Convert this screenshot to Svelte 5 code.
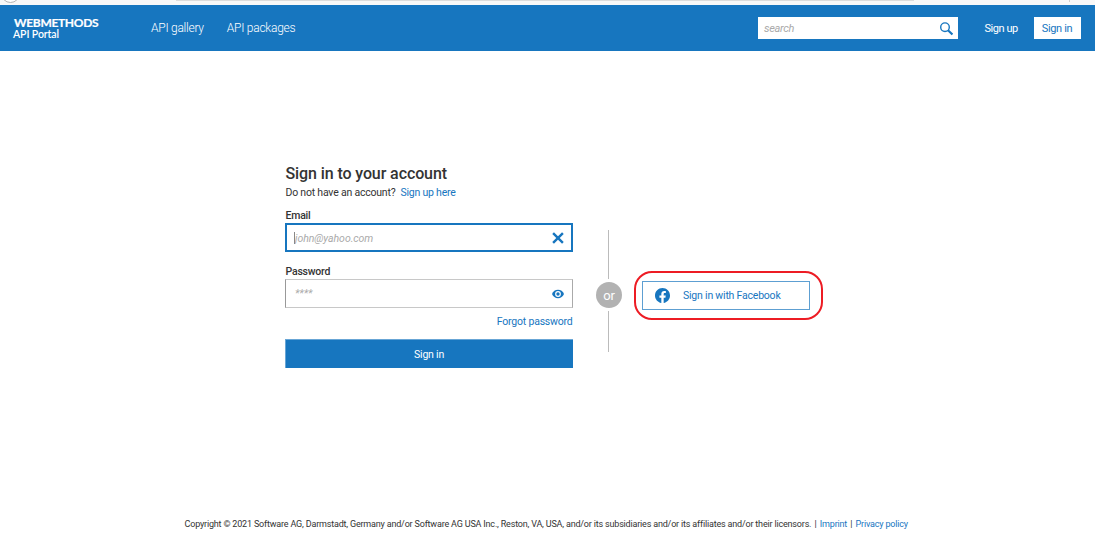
<script>
  let email = $state('');
  let password = $state('');
</script>

<div class="page">
  <div class="chrome">
    <svg width="1095" height="5" viewBox="0 0 1095 5" aria-hidden="true">
      <circle cx="10.5" cy="-6.5" r="9" fill="#fff" stroke="#b5b5b5" />
      <path d="M176 0H914V1H176Z" fill="#dcdcdc" />
      <path d="M1069 0H1070V2H1069Z" fill="#cfcfcf" />
    </svg>
  </div>
  <header>
    <div class="brand"><strong>WEBMETHODS</strong><span>API Portal</span></div>
    <nav><a href="#gallery" class="gallery">API gallery</a><a href="#packages" class="packages">API packages</a></nav>
    <div class="search">
      <span>search</span>
      <svg width="14" height="14" viewBox="0 0 14 14" fill="none" stroke="#1776bf" aria-hidden="true">
        <circle cx="6" cy="5.2" r="4.3" stroke-width="1.4" />
        <path d="M9 8.2L13.4 12.5" stroke-width="2.1" />
      </svg>
    </div>
    <a href="#signup" class="signup">Sign up</a>
    <a href="#signin" class="signin">Sign in</a>
  </header>

  <main>
    <section class="account">
      <h1>Sign in to your account</h1>
      <p class="register"><span>Do not have an account?</span><a href="#register">Sign up here</a></p>
      <label for="email">Email</label>
      <div class="field active">
        <i class="caret"></i>
        <input id="email" bind:value={email} placeholder="john@yahoo.com" />
        <svg width="12" height="12" viewBox="0 0 12 12" aria-hidden="true">
          <path d="M1.1 1.1L10.9 10.9M10.9 1.1L1.1 10.9" stroke="#1776bf" stroke-width="2.4" />
        </svg>
      </div>
      <label class="second" for="password">Password</label>
      <div class="field">
        <input id="password" type="password" bind:value={password} placeholder="****" />
        <svg width="12" height="10" viewBox="0 0 12 10" aria-hidden="true">
          <path d="M0 5C1 2.3 3.3.8 6 .8S11 2.3 12 5C11 7.7 8.7 9.2 6 9.2S1 7.7 0 5Z" fill="#1776bf" />
          <circle cx="6" cy="5" r="2.9" fill="#fff" />
          <circle cx="6" cy="5" r="1.7" fill="#1776bf" />
        </svg>
      </div>
      <a class="forgot" href="#forgot"><span>Forgot password</span></a>
      <button class="submit">Sign in</button>
    </section>

    <div class="divider"><i class="upper"></i><b>or</b><i class="lower"></i></div>

    <div class="highlight">
      <button class="facebook">
        <svg width="15" height="15" viewBox="0 0 24 24" aria-hidden="true">
          <path fill="#1776bf" d="M24 12.07C24 5.4 18.63 0 12 0S0 5.4 0 12.07C0 18.1 4.39 23.1 10.13 24v-8.44H7.08v-3.49h3.05V9.41c0-3.02 1.79-4.69 4.53-4.69 1.31 0 2.68.24 2.68.24v2.97h-1.51c-1.49 0-1.96.93-1.96 1.89v2.25h3.33l-.53 3.49h-2.8V24C19.61 23.1 24 18.1 24 12.07Z" />
        </svg>
        <span>Sign in with Facebook</span>
      </button>
    </div>
  </main>

  <footer><span class="copy">Copyright © 2021 Software AG, Darmstadt, Germany and/or Software AG USA Inc., Reston, VA, USA, and/or its subsidiaries and/or its affiliates and/or their licensors.</span><i>|</i><a href="#imprint">Imprint</a><i>|</i><a href="#privacy">Privacy policy</a></footer>
</div>

<style>
  :global(body) { margin: 0; background: #fff; overflow: hidden; }
  * { box-sizing: border-box; }
  .page { width: 1095px; height: 543px; display: flex; flex-direction: column; font: 10.5px/14px Roboto, sans-serif; letter-spacing: -0.21px; color: #333; white-space: nowrap; }
  a { color: #1776bf; text-decoration: none; }
  svg { display: block; flex: none; }
  .chrome { height: 5px; background: #f8f8f8; flex: none; }
  header { height: 46px; background: #1776bf; display: flex; align-items: center; flex: none; }
  .brand { width: 151px; padding: 0 0 0 13px; color: #fff; display: flex; flex-direction: column; font-family: Lato, sans-serif; }
  .brand strong { font-size: 12px; line-height: 12px; font-weight: 700; letter-spacing: -0.33px; padding: 1px 0 0 1px; -webkit-text-stroke: 0.2px #fff; }
  .brand span { font-size: 10.5px; line-height: 11px; font-weight: 600; letter-spacing: -0.1px; }
  nav { width: 607px; display: flex; gap: 23px; font-size: 12px; letter-spacing: -0.25px; }
  nav a { color: #fff; font-weight: 300; }
  .search { width: 200px; height: 22px; background: #fff; display: flex; align-items: center; justify-content: space-between; padding: 1px 5px 0 6px; color: #aaa; font-style: italic; }
  .search span { font-size: 11px; letter-spacing: -0.3px; }
  .signup { color: #fff; margin-left: 26.5px; width: 49px; padding-top: 1px; font-size: 11px; letter-spacing: -0.45px; }
  .signin { width: 47px; height: 22px; background: #fff; text-align: center; line-height: 23px; font-size: 11px; letter-spacing: -0.35px; }
  main { height: 453px; display: flex; padding-left: 285px; align-items: flex-start; }
  .account { width: 288px; padding-top: 112px; }
  h1 { margin: 0; font-size: 16px; line-height: 20px; font-weight: 500; letter-spacing: -0.1px; padding: 1px 0 0 0.5px; }
  .register { display: flex; gap: 5px; margin: 2px 0 0; line-height: 14px; padding-left: 0.5px; }
  label { display: block; margin-top: 8px; line-height: 15px; font-weight: 500; padding-left: 0.5px; }
  .field { height: 29px; border: 1px solid #c8c8c8; border-left-color: #999; border-right-color: #aaa; display: flex; align-items: center; padding: 0 8px 0 9px; }
  .field.active { border: 2px solid #1776bf; padding: 0 7px; }
  .caret { width: 1px; height: 12px; background: #888; }
  input { border: 0; outline: 0; padding: 2px 0 0; min-width: 0; flex: 1; font: italic 10.5px/14px Roboto, sans-serif; letter-spacing: -0.05px; background: none; }
  input::placeholder { color: #aaa; opacity: 1; }
  #password { padding: 0; }
  label.second { margin-top: 12px; }
  .forgot { display: flex; justify-content: flex-end; margin-top: 6px; line-height: 15px; padding-right: 0.5px; }
  button { font: 10.5px/14px Roboto, sans-serif; letter-spacing: -0.21px; border: 0; padding: 0; border-radius: 0; }
  .submit { display: block; width: 288px; height: 29px; margin-top: 10px; background: #1776bf; color: #fff; padding: 2px 1px 0 0; border: solid #68a6d6; border-width: 1px 0 0 1px; }
  .divider { width: 26px; margin: 179px 0 0 23px; display: flex; flex-direction: column; align-items: flex-start; }
  .divider i { width: 1px; background: #bbb; margin-left: 12px; }
  .upper { height: 49px; }
  .lower { height: 41px; }
  .divider b { width: 26px; height: 26px; margin: 3px 0; border-radius: 50%; background: #b2b2b2; color: #fff; font-size: 13px; line-height: 27px; text-align: center; font-weight: 400; }
  .highlight { width: 189px; height: 49px; margin: 220px 0 0 12px; border: 2px solid #ed1c24; border-radius: 18px; padding: 8px 6px; }
  .facebook { width: 168px; height: 29px; border: 1px solid #5d9fd2; background: #fff; color: #1776bf; display: flex; align-items: center; padding-left: 12px; gap: 13px; }
  footer { height: 39px; padding: 13px 0 0 184.5px; display: flex; font-size: 9px; line-height: 14px; letter-spacing: -0.18px; }
  footer i { font-style: normal; width: 8.5px; text-align: center; }
</style>
